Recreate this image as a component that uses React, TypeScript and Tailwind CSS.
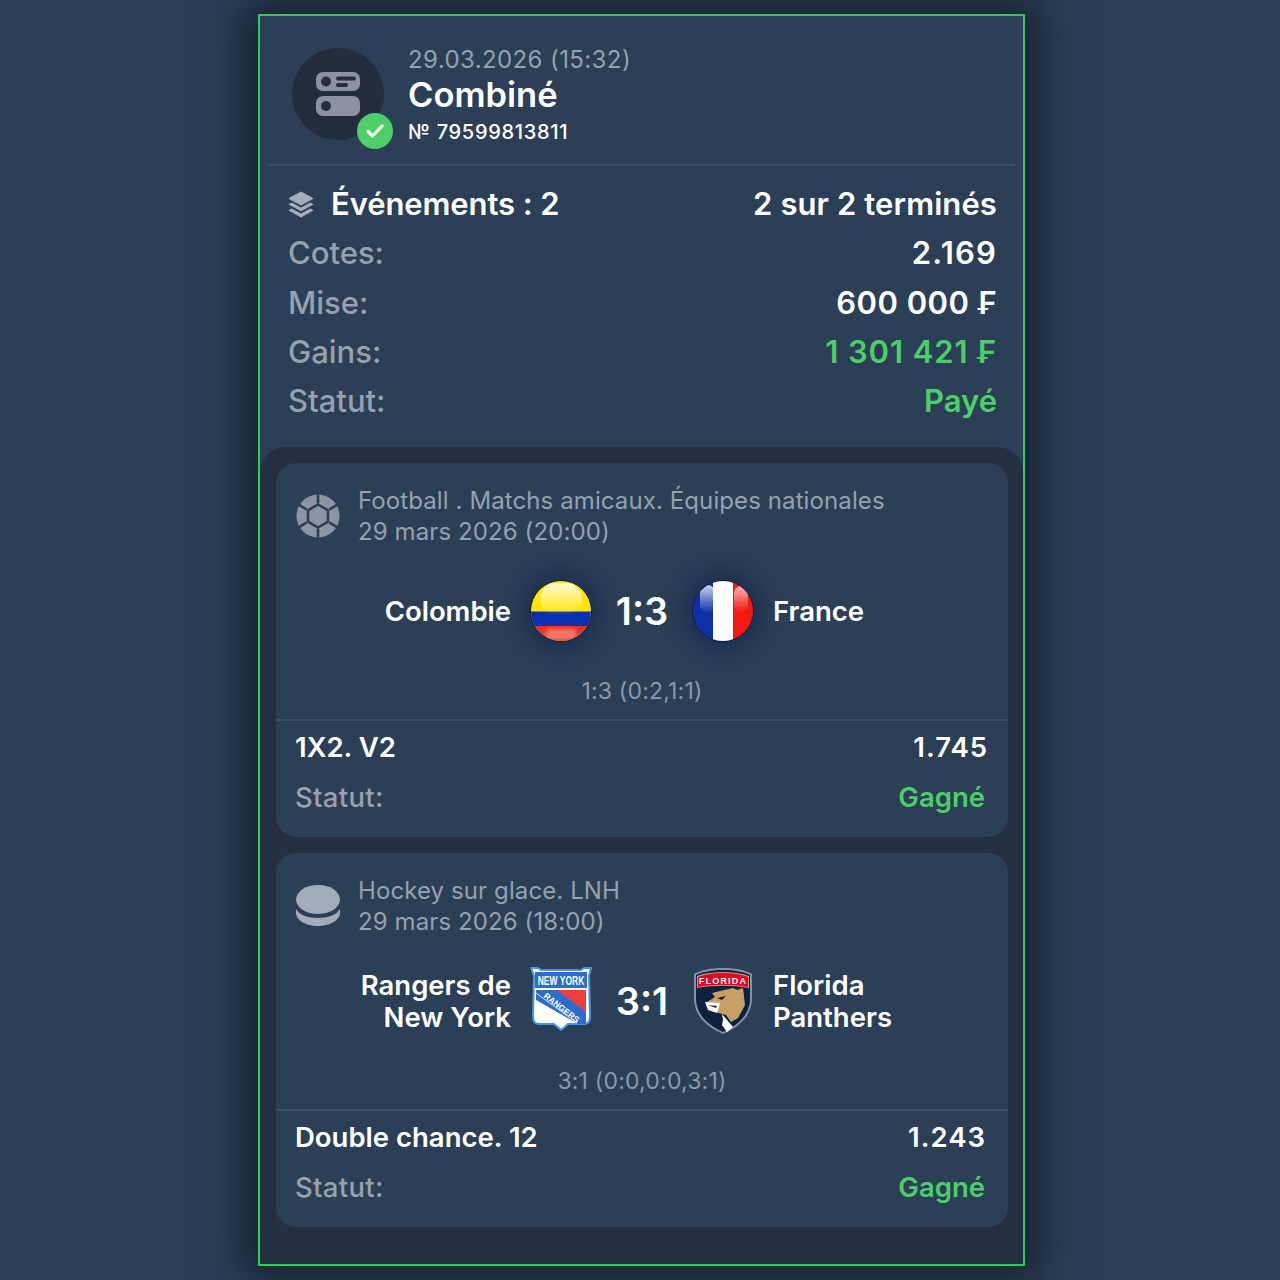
import React from "react";

const font = { fontFamily: "Inter, 'Noto Sans', sans-serif" };

const BetIcon = () => (
  <svg width="46" height="46" viewBox="0 0 46 46">
    <rect x="1" y="1" width="44" height="19" rx="7" fill="#8b92a1" />
    <circle cx="11" cy="10.500" r="5" fill="#252f40" />
    <rect x="21" y="5.500" width="20" height="4" rx="2" fill="#252f40" />
    <rect x="21" y="12" width="12" height="4" rx="2" fill="#252f40" />
    <rect x="1" y="25" width="44" height="20" rx="7" fill="#8b92a1" />
    <circle cx="11" cy="35" r="5" fill="#252f40" />
  </svg>
);

const LayersIcon = () => (
  <svg width="26" height="28" viewBox="0 0 26 28" fill="#a5adba">
    <path d="M13 1 25 7.500 13 14 1 7.500Z" stroke="#a5adba" strokeLinejoin="round" />
    <path d="M3.500 11.500 13 16.600l9.500-5.100 3 1.900L13 20.200.5 13.400Z" />
    <path d="M3.500 17.500 13 22.600l9.500-5.100 3 1.900L13 26.500.5 19.400Z" />
  </svg>
);

const SoccerIcon = () => (
  <svg width="44" height="44" viewBox="0 0 44 44">
    <circle cx="22" cy="22" r="21.500" fill="#8b95a5" />
    <path d="M22 9 33.300 15.500V28.500L22 35 10.700 28.500V15.500Z" fill="#2b3f56" />
    <path d="M22 12 30.660 17V27L22 32 13.340 27V17Z" fill="#8b95a5" />
    <g stroke="#2b3f56" strokeWidth="2.600">
      <path d="M22 9V0" />
      <path d="M22 35v9" />
      <path d="M33.500 15.400 41.500 10.700" />
      <path d="M10.500 15.400 2.500 10.700" />
      <path d="M33.500 28.600 41.500 33.300" />
      <path d="M10.500 28.600 2.500 33.300" />
    </g>
  </svg>
);

const PuckIcon = () => (
  <svg width="44" height="42" viewBox="0 0 44 42" fill="#a3acb9">
    <ellipse cx="22" cy="14.500" rx="22" ry="14.500" />
    <path d="M.2 24C3 30 12 33 22 33s19-3 21.800-9c.4 1.200.2 2.800.2 4 0 7-10 13-22 13S0 35 0 28c0-1.200-.2-2.800.2-4Z" />
  </svg>
);

const ColombiaFlag = () => (
  <div className="relative w-[62px] h-[62px] rounded-full overflow-hidden border border-[#10182c] shadow-[0_0_22px_8px_rgba(12,30,80,0.5)] bg-[#ffe500]">
    <div className="absolute left-0 right-0 top-[30px] h-[15px] bg-[#0b2fb0] border-t border-[#7f8a60]" />
    <div className="absolute left-0 right-0 top-[45px] bottom-0 bg-[#e8321f]" />
    <span className="absolute left-[9px] right-[9px] top-[2px] h-[32px] rounded-full bg-gradient-to-b from-white/85 to-white/0" />
    <span className="absolute left-[14px] right-[14px] bottom-[1px] h-[11px] rounded-full bg-white/35 blur-[2px]" />
  </div>
);

const FranceFlag = () => (
  <div className="relative w-[62px] h-[62px] rounded-full overflow-hidden border border-[#10182c] shadow-[0_0_22px_8px_rgba(12,30,80,0.5)] flex">
    <div className="w-[20px] bg-[#0d2fa8]" />
    <div className="w-[20px] bg-white" />
    <div className="flex-1 bg-[#f01a10]" />
    <span className="absolute left-[7px] top-[4px] w-[15px] h-[28px] rounded-full bg-gradient-to-b from-white/80 to-white/0" />
    <span className="absolute right-[5px] top-[5px] w-[14px] h-[26px] rounded-full bg-gradient-to-b from-white/70 to-white/0" />
  </div>
);

const RangersLogo = () => (
  <svg width="62" height="68" viewBox="0 0 62 68">
    <path d="M1 1h7l3 2h40l3-2h7l-2 8 1 39c0 6-1 9-6 9H38l-7 6-7-6H9c-5 0-6-3-6-9L4 9Z" fill="#fff" stroke="#4a93e0" strokeWidth="2" strokeLinejoin="round" />
    <rect x="5" y="5" width="52" height="16" fill="#2c6ccb" />
    <text fontSize="8.500" fontWeight="700" fill="#fff" textAnchor="middle" fontFamily="'Liberation Sans', sans-serif" transform="translate(31 18) scale(1,1.500)">NEW YORK</text>
    <path d="M6 23h50v34l-8 0L6 33Z" fill="#2c6ccb" />
    <path d="M27 23h29v22Z" fill="#ef3e42" />
    <path d="M6 26 47 56" stroke="#fff" strokeWidth="0.800" />
    <text fontSize="8.500" fontWeight="700" fill="#fff" fontFamily="'Liberation Sans', sans-serif" transform="translate(13 30) rotate(38)">RANGERS</text>
  </svg>
);

const PanthersLogo = () => (
  <svg width="60" height="68" viewBox="0 0 60 68">
    <path d="M30 1C18 1 8 3 1 7v24c0 18 13 29 29 36 16-7 29-18 29-36V7C52 3 42 1 30 1Z" fill="#8592a0" />
    <path d="M30 3C19 3 9 5 3 8v23c0 17 12 27 27 34 15-7 27-17 27-34V8C51 5 41 3 30 3Z" fill="#0d2240" />
    <path d="M4 9c8-3 17-4 26-4s18 1 26 4v12c-16-3-36-3-52 0Z" fill="#c8a063" />
    <path d="M5 10c8-3 16-4 25-4s17 1 25 4v10c-16-3-34-3-50 0Z" fill="#e4002b" />
    <text x="30" y="17" textAnchor="middle" fontSize="9" fontWeight="700" fill="#fff" fontFamily="'Liberation Sans', sans-serif" letterSpacing="1.200">FLORIDA</text>
    <path d="M19 26 40 21l4 2 6-2 2 17-7 13-7 4-5-7-7-2-9-3-3-8 8-5Z" fill="#c8a063" />
    <path d="M12 35l15 1-3 10-9-3Z" fill="#fff" />
    <path d="M29 47l11 13-6 5-5-7 1-5Z" fill="#fff" />
    <path d="M24 31l9-2-4 4Z" fill="#0d2240" />
    <path d="M15 38l9 1-1 2Z" fill="#0d2240" />
  </svg>
);

type MatchProps = {
  league: string;
  date: string;
  icon: React.ReactNode;
  home: React.ReactNode;
  away: React.ReactNode;
  homeLogo: React.ReactNode;
  awayLogo: React.ReactNode;
  score: string;
  detail: string;
  market: string;
  odds: string;
  oddsPad: string;
};

const Match: React.FC<MatchProps> = ({ league, date, icon, home, away, homeLogo, awayLogo, score, detail, market, odds, oddsPad }) => (
  <div className="h-[374px] rounded-[20px] bg-[#2b3f56] flex flex-col">
    <div className="flex items-center h-[74px] mt-[16px] pl-[20px] gap-[18px]">
      <div className="w-[44px] flex justify-center">{icon}</div>
      <div className="text-[24px] leading-[31px] text-[#98a1ae] tracking-[0.1px]">
        <div>{league}</div>
        <div>{date}</div>
      </div>
    </div>
    <div className="h-[64px] mt-[26px] flex items-center">
      <div className="w-[235px] text-right text-[27.500px] leading-[32px] font-semibold text-white">{home}</div>
      <div className="w-[62px] ml-[19px] flex justify-center">{homeLogo}</div>
      <div className="w-[100px] text-center text-[38px] font-semibold text-white">{score}</div>
      <div className="w-[62px] flex justify-center">{awayLogo}</div>
      <div className="ml-[19px] text-[27.500px] leading-[32px] font-semibold text-white">{away}</div>
    </div>
    <div className="mt-[32px] h-[32px] flex items-center justify-center text-[23px] text-[#8e98a6] tracking-[0.2px]">{detail}</div>
    <div className="mt-[12px] h-[2px] bg-[#3c5068]" />
    <div className="flex-1 flex flex-col pl-[19px]">
      <div className="flex justify-between items-center h-[52px] mt-[1px] text-[27.500px] font-semibold text-white">
        <span>{market}</span>
        <span className={`${oddsPad} tracking-[1px]`}>{odds}</span>
      </div>
      <div className="flex justify-between items-center h-[48px] text-[27.500px]">
        <span className="text-[#98a1ae] font-medium tracking-[0.3px]">Statut:</span>
        <span className="pr-[23px] text-[#4ccf68] font-semibold">Gagné</span>
      </div>
    </div>
  </div>
);

const Row: React.FC<{ label: string; value: string; valueClass: string }> = ({ label, value, valueClass }) => (
  <div className="flex justify-between items-center h-[49.300px]">
    <span className="text-[#98a1ae] font-medium">{label}</span>
    <span className={`font-semibold ${valueClass}`}>{value}</span>
  </div>
);

export default function App() {
  return (
    <div style={font} className="w-full h-[1280px] bg-[#2a3f56] flex justify-center pt-[14px] overflow-hidden">
      <div className="w-[767px] h-[1252px] ml-[3px] border-2 border-[#2ecb55] bg-[#2b3f56] shadow-[0_0_40px_14px_rgba(20,26,40,0.8)] flex flex-col">
        <div className="h-[150px] mx-[8px] border-b-2 border-[#3c5068] flex items-center pl-[24px] pt-[7px]">
          <div className="relative w-[92px] h-[92px] rounded-full bg-[#232d3e] flex items-center justify-center">
            <BetIcon />
            <div className="absolute left-[65px] top-[65px] w-[36px] h-[36px] rounded-full bg-[#4ccf68] flex items-center justify-center">
              <svg width="18" height="14" viewBox="0 0 18 14" fill="none" stroke="#fff" strokeWidth="3.200" strokeLinecap="round" strokeLinejoin="round">
                <path d="M2 7.500 6.500 12 16 2" />
              </svg>
            </div>
          </div>
          <div className="ml-[24px] mt-[4px] flex flex-col">
            <div className="text-[24px] leading-[30px] text-[#98a1ae] tracking-[0.4px]">29.03.2026 (15:32)</div>
            <div className="text-[34.500px] leading-[40px] font-semibold text-white">Combiné</div>
            <div className="text-[20px] leading-[30px] mt-[2px] font-medium text-white tracking-[0.7px]">№ 79599813811</div>
          </div>
        </div>

        <div className="h-[281px] pl-[28px] pr-[26px] pt-[14px] text-[31px]">
          <div className="flex justify-between items-center h-[49px]">
            <span className="flex items-center font-semibold text-white">
              <LayersIcon />
              <span className="ml-[17px] tracking-[-0.1px]">Événements : 2</span>
            </span>
            <span className="font-semibold text-white tracking-[0.1px]">2 sur 2 terminés</span>
          </div>
          <Row label="Cotes:" value="2.169" valueClass="text-white tracking-[1.200px]" />
          <Row label="Mise:" value="600 000 ₣" valueClass="text-white tracking-[0.450px]" />
          <Row label="Gains:" value="1 301 421 ₣" valueClass="text-[#4ccf68] tracking-[0.900px]" />
          <Row label="Statut:" value="Payé" valueClass="text-[#4ccf68]" />
        </div>

        <div className="flex-1 rounded-t-[26px] bg-[#242f41] pl-[16px] pt-[16px] pr-[15px] flex flex-col gap-[16px]">
          <Match
            league="Football . Matchs amicaux. Équipes nationales"
            date="29 mars 2026 (20:00)"
            icon={<SoccerIcon />}
            home="Colombie"
            away="France"
            homeLogo={<ColombiaFlag />}
            awayLogo={<FranceFlag />}
            score="1:3"
            detail="1:3 (0:2,1:1)"
            market="1X2. V2"
            odds="1.745"
            oddsPad="pr-[20px]"
          />
          <Match
            league="Hockey sur glace. LNH"
            date="29 mars 2026 (18:00)"
            icon={<PuckIcon />}
            home={<>Rangers de<br />New York</>}
            away={<>Florida<br />Panthers</>}
            homeLogo={<RangersLogo />}
            awayLogo={<PanthersLogo />}
            score="3:1"
            detail="3:1 (0:0,0:0,3:1)"
            market="Double chance. 12"
            odds="1.243"
            oddsPad="pr-[22px]"
          />
        </div>
      </div>
    </div>
  );
}
